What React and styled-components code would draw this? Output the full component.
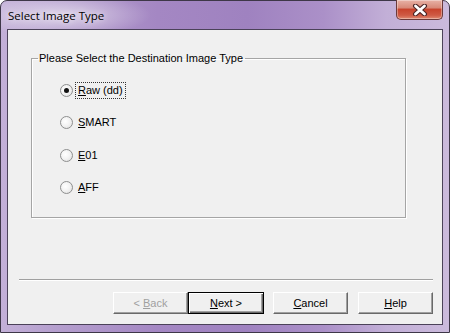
import styled, { createGlobalStyle } from 'styled-components';

const Global = createGlobalStyle`
  html, body { margin: 0; padding: 0; background: #fff; }
  body { font-family: "Liberation Sans", Arial, sans-serif; }
`;

const Window = styled.div`
  box-sizing: border-box;
  width: 450px;
  height: 333px;
  border: 1px solid #3e3748;
  border-radius: 7px 7px 0 0;
  padding: 0 6px 7px 6px;
  display: flex;
  flex-direction: column;
  background:
    radial-gradient(ellipse 90px 22px at 60px 14px, rgba(255,255,255,0.55), rgba(255,255,255,0) 100%),
    linear-gradient(to right, #c3b0d8 0%, #b59fce 12%, #a487c3 35%, #9f82c0 55%, #ab90c8 72%, #c2afd7 86%, #cbbadc 100%);
`;

const TitleBar = styled.div`
  height: 28px;
  display: flex;
  justify-content: space-between;
  align-items: flex-start;
`;

const Title = styled.span`
  font-family: "Open Sans", "Noto Sans", sans-serif;
  font-size: 11.5px;
  color: #000;
  padding: 7px 0 0 1px;
  text-shadow: 0 0 6px rgba(255,255,255,0.9);
`;

const CloseButton = styled.div`
  box-sizing: border-box;
  width: 47px;
  height: 20px;
  margin-top: -1px;
  border: 1px solid #6b3a3a;
  border-top: none;
  border-radius: 0 0 5px 5px;
  display: flex;
  align-items: center;
  justify-content: center;
  background: linear-gradient(to bottom, #e8b2a6 0%, #d88a79 40%, #c8442d 50%, #cf5a44 80%, #e08a72 100%);
  box-shadow: inset 0 0 0 1px rgba(255,255,255,0.35);
`;

const Client = styled.div`
  flex: 1;
  border: 1px solid #4b4259;
  background: #f0f0f0;
  display: flex;
  flex-direction: column;
  font-size: 11px;
  color: #000;
`;

const Group = styled.fieldset`
  box-sizing: border-box;
  width: 375px;
  height: 166px;
  margin: 22px 0 0 23px;
  padding: 0;
  border: 1px solid #a5a5a5;
  box-shadow: 1px 1px 0 #fff, inset 1px 1px 0 #fff;
`;

const Legend = styled.legend`
  padding: 0 2px 0 1px;
  margin-left: 6px;
  font-size: 11px;
  line-height: 13px;
`;

const Options = styled.div`
  display: flex;
  flex-direction: column;
  gap: 19.5px;
  padding: 18.5px 0 0 28px;
`;

const Option = styled.label`
  display: flex;
  align-items: center;
  gap: 4px;
  height: 13px;
`;

const Radio = styled.span`
  box-sizing: border-box;
  width: 13px;
  height: 13px;
  border-radius: 50%;
  border: 1px solid #8e8f8f;
  background: radial-gradient(circle at 40% 40%, #ffffff 0%, #f3f3f3 45%, #dcdcdc 100%);
  display: flex;
  align-items: center;
  justify-content: center;
  &::after {
    content: '';
    width: 5px;
    height: 5px;
    border-radius: 50%;
    background: ${p => (p.checked ? '#111' : 'transparent')};
  }
`;

const Caption = styled.span`
  padding: 1px 2px;
  margin-left: -2px;
  border: 1px dotted ${p => (p.focused ? '#333' : 'transparent')};
  line-height: 13px;
`;

const Key = styled.span`
  text-decoration: underline;
`;

const Separator = styled.div`
  height: 1px;
  margin: 61px 9px 0 11px;
  background: #a0a0a0;
  border-bottom: 1px solid #fff;
`;

const ButtonRow = styled.div`
  display: flex;
  justify-content: flex-end;
  margin: 11px 9px 0 0;
`;

const Button = styled.div`
  box-sizing: border-box;
  width: ${p => (p.isDefault ? '76px' : '75px')};
  height: 22px;
  margin-left: ${p => p.gap}px;
  display: flex;
  align-items: center;
  justify-content: center;
  background: #f0f0f0;
  color: ${p => (p.disabled ? '#a0a0a0' : '#000')};
  border: 1px solid;
  border-color: ${p => (p.isDefault ? '#000' : '#fff #696969 #696969 #fff')};
  box-shadow: ${p =>
    p.isDefault
      ? 'inset 1px 1px 0 #fff, inset -1px -1px 0 #696969, inset -2px -2px 0 #a0a0a0'
      : 'inset -1px -1px 0 #a0a0a0'};
`;

function CloseGlyph() {
  return (
    <svg width="16" height="12" viewBox="0 0 16 12">
      <path d="M3.5 2 L12.5 10 M12.5 2 L3.5 10" stroke="#4a2424" strokeWidth="5" strokeLinecap="round" />
      <path d="M3.5 2 L12.5 10 M12.5 2 L3.5 10" stroke="#fff" strokeWidth="2.8" strokeLinecap="round" />
    </svg>
  );
}

const options = [
  { key: 'R', rest: 'aw (dd)', checked: true },
  { key: 'S', rest: 'MART' },
  { key: 'E', rest: '01' },
  { key: 'A', rest: 'FF' },
];

export default function App() {
  return (
    <>
      <Global />
      <Window>
        <TitleBar>
          <Title>Select Image Type</Title>
          <CloseButton>
            <CloseGlyph />
          </CloseButton>
        </TitleBar>
        <Client>
          <Group>
            <Legend>Please Select the Destination Image Type</Legend>
            <Options>
              {options.map(o => (
                <Option key={o.key}>
                  <Radio checked={o.checked} />
                  <Caption focused={o.checked}>
                    <Key>{o.key}</Key>
                    {o.rest}
                  </Caption>
                </Option>
              ))}
            </Options>
          </Group>
          <Separator />
          <ButtonRow>
            <Button disabled gap={0}>
              &lt;&nbsp;<Key>B</Key>ack
            </Button>
            <Button isDefault gap={0}>
              <Key>N</Key>ext &gt;
            </Button>
            <Button gap={9}>
              <Key>C</Key>ancel
            </Button>
            <Button gap={10}>
              <Key>H</Key>elp
            </Button>
          </ButtonRow>
        </Client>
      </Window>
    </>
  );
}
